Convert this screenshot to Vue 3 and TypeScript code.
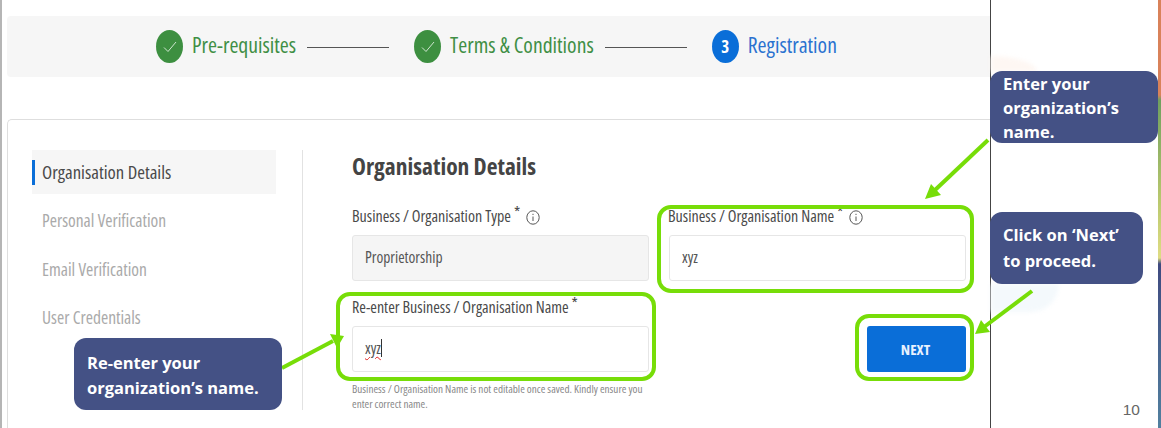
<script setup lang="ts">
interface Step { label: string; state: 'done' | 'current'; num?: number }
const steps: Step[] = [
  { label: 'Pre-requisites', state: 'done' },
  { label: 'Terms & Conditions', state: 'done' },
  { label: 'Registration', state: 'current', num: 3 },
]
const menu = ['Organisation Details', 'Personal Verification', 'Email Verification', 'User Credentials']
</script>

<template>
  <div class="page">
    <main class="main">
      <nav class="stepper">
        <template v-for="(s, i) in steps" :key="s.label">
          <div class="step" :class="s.state">
            <span class="badge">
              <svg v-if="s.state === 'done'" width="14" height="12" viewBox="0 0 14 12" fill="none">
                <path d="M1 6.5 L5 10.5 L13 1" stroke="#cfe6d0" stroke-width="1" />
              </svg>
              <template v-else>{{ s.num }}</template>
            </span>
            <span class="step-label">{{ s.label }}</span>
          </div>
          <span v-if="i < steps.length - 1" class="connector"></span>
        </template>
      </nav>

      <section class="card">
        <ul class="menu">
          <li v-for="(m, i) in menu" :key="m" class="menu-item" :class="{ active: i === 0 }">{{ m }}</li>
        </ul>
        <div class="form-pane">
          <h2 class="title">Organisation Details</h2>
          <div class="form-grid">
            <div class="field">
              <label class="label">Business / Organisation Type <sup>*</sup>
                <svg class="info" width="14" height="15" viewBox="0 0 14 15" fill="none" stroke="#555">
                  <ellipse cx="7" cy="7.5" rx="6.2" ry="6.7" />
                  <path d="M7 6.5 V11 M7 3.8 V5" />
                </svg>
              </label>
              <div class="input disabled">Proprietorship</div>
            </div>
            <div class="field">
              <label class="label name-label">Business / Organisation Name <sup>*</sup>
                <svg class="info" width="14" height="15" viewBox="0 0 14 15" fill="none" stroke="#555">
                  <ellipse cx="7" cy="7.5" rx="6.2" ry="6.7" />
                  <path d="M7 6.5 V11 M7 3.8 V5" />
                </svg>
              </label>
              <div class="input">xyz</div>
            </div>
            <div class="field">
              <label class="label">Re-enter Business / Organisation Name <sup>*</sup></label>
              <div class="input"><span class="typed">xyz</span><span class="caret"></span></div>
              <p class="hint">Business / Organisation Name is not editable once saved. Kindly ensure you enter correct name.</p>
            </div>
            <div class="actions">
              <button class="next" type="button">NEXT</button>
            </div>
          </div>
        </div>
      </section>
    </main>

    <aside class="side">
      <span class="page-no">10</span>
    </aside>

    <!-- Annotation layer drawn over the screenshot -->
    <i class="edge"></i>
    <i class="blob orange"></i>
    <i class="blob blue"></i>
    <i class="hl hl-name"></i>
    <i class="hl hl-re"></i>
    <i class="hl hl-next"></i>
    <svg class="arrows" width="1161" height="428" viewBox="0 0 1161 428">
      <g stroke="#77dd08" stroke-width="4" fill="#77dd08">
        <line x1="988" y1="140" x2="934" y2="191" />
        <line x1="1032" y1="291" x2="984" y2="327" />
        <line x1="282" y1="368" x2="333" y2="341" />
      </g>
      <g fill="#77dd08">
        <polygon points="925,199 931,184 941,195" />
        <polygon points="975,334 981,320 990,332" />
        <polygon points="344,336 330,334 337,348" />
      </g>
    </svg>
    <div class="note note-1">Enter your organization’s name.</div>
    <div class="note note-2">Click on ‘Next’ to proceed.</div>
    <div class="note note-3">Re-enter your organization’s name.</div>
  </div>
</template>

<style>
html, body { margin: 0; background: #fff; }
</style>

<style scoped>
.page {
  position: relative;
  display: flex;
  width: 1161px;
  height: 428px;
  overflow: hidden;
  background: #fff;
  font-family: "Open Sans", sans-serif;
  font-stretch: 75%;
  color: #444;
}
.main {
  box-sizing: border-box;
  width: 991px;
  height: 428px;
  padding: 16px 0 0 5px;
  border-left: 2px solid #b5b5b5;
  border-right: 1px solid #444;
  overflow: hidden;
  flex: none;
}
.stepper {
  display: flex;
  align-items: center;
  height: 61px;
  padding-left: 149px;
  background: #f6f6f6;
  border-radius: 4px 0 0 4px;
}
.step { display: flex; align-items: center; gap: 9px; }
.badge {
  display: flex;
  align-items: center;
  justify-content: center;
  width: 27px;
  height: 33px;
  border-radius: 50%;
  font-size: 17px;
  font-weight: 700;
  color: #fff;
}
.done .badge { background: #3d8f40; }
.current .badge { background: #0a6ed8; }
.step-label { font-size: 21.7px; margin-top: -5px; }
.done .step-label { color: #3f8f45; }
.current .step-label { color: #2a72d0; }
.connector {
  flex: none;
  width: 82px;
  height: 1px;
  margin: 2px 25px 0 11px;
  background: #555;
}
.card {
  display: flex;
  height: 320px;
  margin-top: 42px;
  padding: 30px 0 0 24px;
  border: 1px solid #dedede;
  border-right: 0;
  border-radius: 5px 0 0 0;
  box-sizing: border-box;
}
.menu {
  list-style: none;
  width: 244px;
  margin: 0;
  padding: 0;
  flex: none;
}
.menu-item {
  box-sizing: border-box;
  height: 44px;
  margin-bottom: 4.3px;
  padding-left: 10px;
  line-height: 44px;
  font-size: 17.5px;
  color: #aaa;
}
.menu-item.active {
  background: #f6f6f6;
  color: #4a4a4a;
  font-size: 18.7px;
  position: relative;
}
.menu-item.active::before {
  content: "";
  position: absolute;
  left: 0;
  top: 10px;
  width: 3px;
  height: 25px;
  background: #0a6ed8;
}
.form-pane {
  width: 664px;
  height: 260px;
  margin-left: 26px;
  padding-left: 49px;
  border-left: 1px solid #e2e2e2;
  flex: none;
}
.title {
  margin: 2px 0 0;
  font-size: 23.5px;
  line-height: 29px;
  font-weight: 700;
  color: #444;
}
.form-grid {
  display: grid;
  grid-template-columns: 297px 297px;
  column-gap: 20px;
  margin-top: 20px;
}
.field { display: flex; flex-direction: column; }
.label {
  height: 34px;
  font-size: 16px;
  line-height: 30px;
  color: #4a4a4a;
  white-space: nowrap;
}
.name-label { margin-left: -1px; }
.label sup { font-size: 16px; line-height: 0; vertical-align: 4px; }
.info { margin-left: 6px; vertical-align: -3px; }
.input {
  box-sizing: border-box;
  display: flex;
  align-items: center;
  height: 46px;
  padding: 0 0 3px 12px;
  border: 1px solid #e6e6e6;
  border-radius: 3px;
  font-size: 15.5px;
  color: #555;
  background: #fff;
}
.input.disabled { background: #f5f5f5; margin-bottom: 11px; }
.typed {
  text-decoration: underline wavy #e02020 1px;
  text-underline-offset: 2px;
}
.caret { width: 1px; height: 18px; background: #333; }
.hint {
  margin: 9px 0 0;
  font-size: 11.2px;
  line-height: 15px;
  color: #888;
}
.actions { display: flex; justify-content: flex-end; align-items: flex-start; padding-top: 34px; }
.next {
  width: 99px;
  height: 46px;
  padding: 0 2px 0 0;
  border: 0;
  border-radius: 3px;
  background: #0a6ed8;
  color: #e8f2ff;
  font-family: inherit;
  font-stretch: inherit;
  font-size: 15px;
  font-weight: 700;
}
.side { position: relative; flex: 1; }
.page-no {
  position: absolute;
  right: 21px;
  top: 401px;
  font-family: "Liberation Sans", sans-serif;
  font-size: 15.5px;
  color: #666;
}
.edge {
  position: absolute;
  right: 0;
  top: 0;
  width: 3px;
  height: 428px;
  background: linear-gradient(#d9825a 0 95px, #6f9f5f 100px, #b9c86e 200px, #dfdc84 258px, #3f4a80 264px, #52809f 428px);
}
.blob { position: absolute; filter: blur(2px); }
.blob.orange { left: 991px; top: 56px; width: 46px; height: 16px; background: #fef7f3; border-radius: 0 100% 0 0; }
.blob.blue { left: 991px; top: 284px; width: 68px; height: 28px; background: #f4f9fc; border-radius: 0 0 30px 0; }
.hl {
  position: absolute;
  box-sizing: border-box;
  border: 4px solid #77dd08;
  border-radius: 14px;
}
.hl-name { left: 657px; top: 205px; width: 317px; height: 88px; }
.hl-re { left: 336px; top: 292px; width: 320px; height: 89px; }
.hl-next { left: 855px; top: 314px; width: 119px; height: 67px; }
.arrows { position: absolute; left: 0; top: 0; pointer-events: none; }
.note {
  position: absolute;
  box-sizing: border-box;
  height: 72px;
  background: #445185;
  border-radius: 12px;
  color: #fff;
  font-family: "Open Sans", sans-serif;
  font-stretch: 100%;
  font-size: 16.5px;
  font-weight: 700;
}
.note-1 { left: 990px; top: 71px; width: 168px; padding: 1px 30px 0 13px; line-height: 24px; }
.note-2 { left: 990px; top: 212px; width: 153px; padding: 10px 20px 0 13px; line-height: 26px; }
.note-3 { left: 74px; top: 338px; width: 208px; padding: 12px 13px 0 13px; line-height: 25px; }
</style>
